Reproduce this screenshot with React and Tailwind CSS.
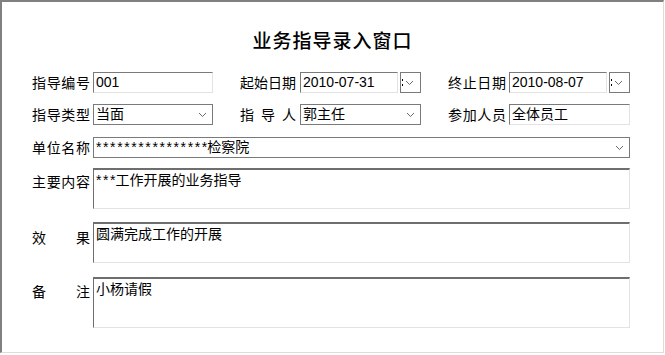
import React from 'react';

const cjk = { fontFamily: '"Noto Sans CJK SC", sans-serif' };
const mixed = { fontFamily: '"Liberation Sans", "Noto Sans CJK SC", sans-serif' };

const Chevron = () => (
  <svg width="9" height="6" viewBox="0 0 9 6" className="shrink-0">
    <path d="M1 1 L4.5 4.5 L8 1" fill="none" stroke="#6b6b6b" strokeWidth="1" />
  </svg>
);

const Label = ({ chars, w = 'w-[58px]' }) => (
  <div className={`${w} h-[21px] flex justify-between items-center text-[14px] text-black shrink-0`} style={cjk}>
    {chars.map((c, i) => (
      <span key={i}>{c}</span>
    ))}
  </div>
);

const TextBox = ({ w, children }) => (
  <div
    className={`${w} h-[21px] flex items-center pl-[2px] text-[14px] text-black bg-white border-t border-l border-[#7a7a7a] border-r border-b border-r-[#e3e3e3] border-b-[#e3e3e3] overflow-hidden whitespace-nowrap shrink-0`}
    style={mixed}
  >
    {children}
  </div>
);

const SelectBox = ({ w, children }) => (
  <div
    className={`${w} h-[21px] flex items-center justify-between pl-[2px] pr-[5px] text-[14px] text-black bg-white border border-[#7a7a7a] overflow-hidden whitespace-nowrap shrink-0`}
    style={mixed}
  >
    <span>{children}</span>
    <Chevron />
  </div>
);

const Spin = () => (
  <div className="w-[21px] h-[21px] ml-[2px] flex items-center gap-[2px] pl-[1px] border border-[#7a7a7a] bg-white shrink-0">
    <span className="flex flex-col gap-[3px]">
      <span className="w-[1px] h-[2px] bg-black" />
      <span className="w-[1px] h-[2px] bg-black" />
    </span>
    <Chevron />
  </div>
);

const Area = ({ h, children }) => (
  <div
    className={`w-[537px] ${h} pl-[2px] text-[14px] leading-[20px] text-black bg-white border-t-2 border-l border-[#6e6e6e] border-r border-b border-r-[#e3e3e3] border-b-[#e3e3e3] shrink-0`}
    style={mixed}
  >
    {children}
  </div>
);

// stars are wider in the old UI font, spread them out; the last one has no trailing gap
const Stars = ({ n }) => (
  <>
    <span className="tracking-[1.6px]">{'*'.repeat(n - 1)}</span>
    <span>*</span>
  </>
);

export default function App() {
  return (
    <div className="w-[665px] h-[355px] bg-white">
      <div className="w-[664px] h-[353px] border-t-2 border-l-2 border-[#808080] border-r border-b border-r-[#dcdcdc] border-b-[#dcdcdc]">
        <div
          className="mt-[25px] h-[26px] leading-[26px] text-center text-[19px] font-medium text-black tracking-[1px]"
          style={cjk}
        >
          业务指导录入窗口
        </div>

        <div className="pl-[30px] mt-[19px] flex flex-col">
          <div className="flex items-center">
            <Label chars={['指', '导', '编', '号']} />
            <div className="ml-[3px]">
              <TextBox w="w-[120px]">001</TextBox>
            </div>
            <div className="ml-[27px]">
              <Label chars={['起', '始', '日', '期']} w="w-[56px]" />
            </div>
            <div className="ml-[4px] flex">
              <TextBox w="w-[98px]">2010-07-31</TextBox>
              <Spin />
            </div>
            <div className="ml-[27px]">
              <Label chars={['终', '止', '日', '期']} />
            </div>
            <div className="ml-[3px] flex">
              <TextBox w="w-[98px]">2010-08-07</TextBox>
              <Spin />
            </div>
          </div>

          <div className="flex items-center mt-[11px]">
            <Label chars={['指', '导', '类', '型']} />
            <div className="ml-[3px]">
              <SelectBox w="w-[120px]">当面</SelectBox>
            </div>
            <div className="ml-[27px]">
              <Label chars={['指', '导', '人']} w="w-[56px]" />
            </div>
            <div className="ml-[4px]">
              <SelectBox w="w-[121px]">郭主任</SelectBox>
            </div>
            <div className="ml-[27px]">
              <Label chars={['参', '加', '人', '员']} />
            </div>
            <div className="ml-[3px]">
              <TextBox w="w-[121px]">全体员工</TextBox>
            </div>
          </div>

          <div className="flex items-center mt-[12px]">
            <Label chars={['单', '位', '名', '称']} />
            <div className="ml-[3px]">
              <SelectBox w="w-[537px]">
                <Stars n={16} />
                检察院
              </SelectBox>
            </div>
          </div>

          <div className="flex items-start mt-[10px]">
            <div className="mt-[3px]">
              <Label chars={['主', '要', '内', '容']} />
            </div>
            <div className="ml-[3px]">
              <Area h="h-[41px]">
                <Stars n={3} />
                工作开展的业务指导
              </Area>
            </div>
          </div>

          <div className="flex items-start mt-[13px]">
            <div className="mt-[5px]">
              <Label chars={['效', '果']} />
            </div>
            <div className="ml-[3px]">
              <Area h="h-[41px]">圆满完成工作的开展</Area>
            </div>
          </div>

          <div className="flex items-start mt-[14px]">
            <div className="mt-[4px]">
              <Label chars={['备', '注']} />
            </div>
            <div className="ml-[3px]">
              <Area h="h-[51px]">小杨请假</Area>
            </div>
          </div>
        </div>
      </div>
    </div>
  );
}
